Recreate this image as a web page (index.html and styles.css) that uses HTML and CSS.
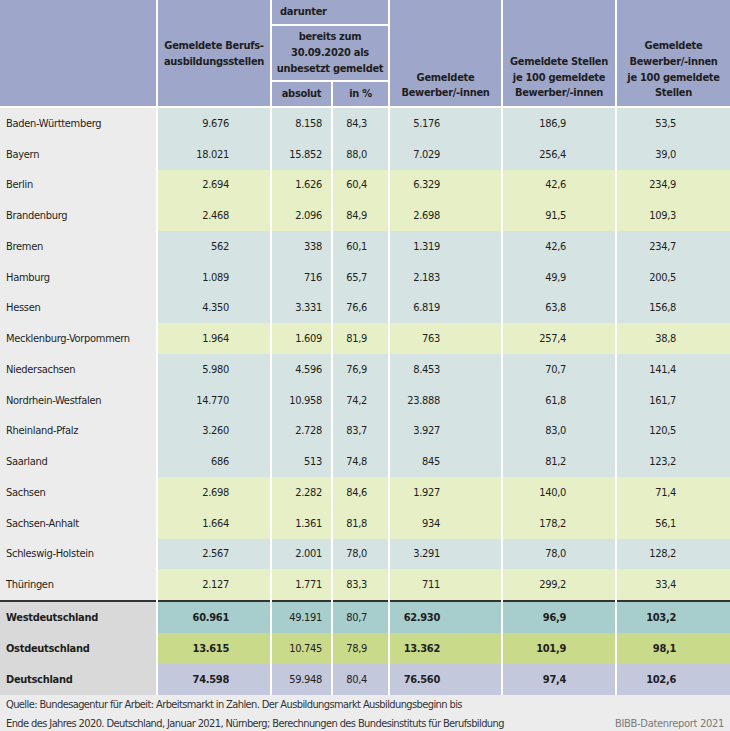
FILE: index.html
```html
<!DOCTYPE html>
<html lang="de">
<head>
<meta charset="utf-8">
<title>Ausbildungsstellen</title>
<link rel="stylesheet" href="styles.css">
</head>
<body>
<table class="t">
  <colgroup>
    <col class="w1"><col class="w2"><col class="w3"><col class="w4"><col class="w5"><col class="w6"><col class="w7">
  </colgroup>
  <thead>
    <tr class="hr1">
      <th rowspan="3" class="first"></th>
      <th rowspan="3" class="mid">Gemeldete Berufs-<br>ausbildungsstellen</th>
      <th colspan="2" class="dar">darunter</th>
      <th rowspan="3" class="bot">Gemeldete<br>Bewerber/-innen</th>
      <th rowspan="3" class="bot">Gemeldete Stellen<br>je 100 gemeldete<br>Bewerber/-innen</th>
      <th rowspan="3" class="bot">Gemeldete<br>Bewerber/-innen<br>je 100 gemeldete<br>Stellen</th>
    </tr>
    <tr class="hr2">
      <th colspan="2">bereits zum<br>30.09.2020 als<br>unbesetzt gemeldet</th>
    </tr>
    <tr class="hr3">
      <th>absolut</th>
      <th>in %</th>
    </tr>
  </thead>
  <tbody>
    <tr class="w"><td class="lbl">Baden-Württemberg</td><td class="n2">9.676</td><td class="n3">8.158</td><td class="n4">84,3</td><td class="n5">5.176</td><td class="n6">186,9</td><td class="n7">53,5</td></tr>
    <tr class="w"><td class="lbl">Bayern</td><td class="n2">18.021</td><td class="n3">15.852</td><td class="n4">88,0</td><td class="n5">7.029</td><td class="n6">256,4</td><td class="n7">39,0</td></tr>
    <tr class="e"><td class="lbl">Berlin</td><td class="n2">2.694</td><td class="n3">1.626</td><td class="n4">60,4</td><td class="n5">6.329</td><td class="n6">42,6</td><td class="n7">234,9</td></tr>
    <tr class="e"><td class="lbl">Brandenburg</td><td class="n2">2.468</td><td class="n3">2.096</td><td class="n4">84,9</td><td class="n5">2.698</td><td class="n6">91,5</td><td class="n7">109,3</td></tr>
    <tr class="w"><td class="lbl">Bremen</td><td class="n2">562</td><td class="n3">338</td><td class="n4">60,1</td><td class="n5">1.319</td><td class="n6">42,6</td><td class="n7">234,7</td></tr>
    <tr class="w"><td class="lbl">Hamburg</td><td class="n2">1.089</td><td class="n3">716</td><td class="n4">65,7</td><td class="n5">2.183</td><td class="n6">49,9</td><td class="n7">200,5</td></tr>
    <tr class="w"><td class="lbl">Hessen</td><td class="n2">4.350</td><td class="n3">3.331</td><td class="n4">76,6</td><td class="n5">6.819</td><td class="n6">63,8</td><td class="n7">156,8</td></tr>
    <tr class="e"><td class="lbl">Mecklenburg-Vorpommern</td><td class="n2">1.964</td><td class="n3">1.609</td><td class="n4">81,9</td><td class="n5">763</td><td class="n6">257,4</td><td class="n7">38,8</td></tr>
    <tr class="w"><td class="lbl">Niedersachsen</td><td class="n2">5.980</td><td class="n3">4.596</td><td class="n4">76,9</td><td class="n5">8.453</td><td class="n6">70,7</td><td class="n7">141,4</td></tr>
    <tr class="w"><td class="lbl">Nordrhein-Westfalen</td><td class="n2">14.770</td><td class="n3">10.958</td><td class="n4">74,2</td><td class="n5">23.888</td><td class="n6">61,8</td><td class="n7">161,7</td></tr>
    <tr class="w"><td class="lbl">Rheinland-Pfalz</td><td class="n2">3.260</td><td class="n3">2.728</td><td class="n4">83,7</td><td class="n5">3.927</td><td class="n6">83,0</td><td class="n7">120,5</td></tr>
    <tr class="w"><td class="lbl">Saarland</td><td class="n2">686</td><td class="n3">513</td><td class="n4">74,8</td><td class="n5">845</td><td class="n6">81,2</td><td class="n7">123,2</td></tr>
    <tr class="e"><td class="lbl">Sachsen</td><td class="n2">2.698</td><td class="n3">2.282</td><td class="n4">84,6</td><td class="n5">1.927</td><td class="n6">140,0</td><td class="n7">71,4</td></tr>
    <tr class="e"><td class="lbl">Sachsen-Anhalt</td><td class="n2">1.664</td><td class="n3">1.361</td><td class="n4">81,8</td><td class="n5">934</td><td class="n6">178,2</td><td class="n7">56,1</td></tr>
    <tr class="w"><td class="lbl">Schleswig-Holstein</td><td class="n2">2.567</td><td class="n3">2.001</td><td class="n4">78,0</td><td class="n5">3.291</td><td class="n6">78,0</td><td class="n7">128,2</td></tr>
    <tr class="e"><td class="lbl">Thüringen</td><td class="n2">2.127</td><td class="n3">1.771</td><td class="n4">83,3</td><td class="n5">711</td><td class="n6">299,2</td><td class="n7">33,4</td></tr>
    <tr class="sum sw"><td class="lbl">Westdeutschland</td><td class="n2">60.961</td><td class="n3">49.191</td><td class="n4">80,7</td><td class="n5">62.930</td><td class="n6">96,9</td><td class="n7">103,2</td></tr>
    <tr class="sum so"><td class="lbl">Ostdeutschland</td><td class="n2">13.615</td><td class="n3">10.745</td><td class="n4">78,9</td><td class="n5">13.362</td><td class="n6">101,9</td><td class="n7">98,1</td></tr>
    <tr class="sum sd"><td class="lbl">Deutschland</td><td class="n2">74.598</td><td class="n3">59.948</td><td class="n4">80,4</td><td class="n5">76.560</td><td class="n6">97,4</td><td class="n7">102,6</td></tr>
  </tbody>
</table>
<div class="foot">
  <p class="fl">Quelle: Bundesagentur für Arbeit: Arbeitsmarkt in Zahlen. Der Ausbildungsmarkt Ausbildungsbeginn bis</p>
  <p class="fl row"><span>Ende des Jahres 2020. Deutschland, Januar 2021, Nürnberg; Berechnungen des Bundesinstituts für Berufsbildung</span><span class="src">BIBB-Datenreport 2021</span></p>
</div>
</body>
</html>
```
FILE: styles.css
```css
html, body {
  margin: 0;
  padding: 0;
  background: #ececec;
}
body {
  width: 730px;
  font-family: "DejaVu Sans Condensed", "Liberation Sans Narrow", "Liberation Sans", sans-serif;
  font-size: 11px;
  letter-spacing: -0.3px;
  color: #1e1e1e;
}
.t {
  width: 730px;
  table-layout: fixed;
  border-collapse: collapse;
}
.w1 { width: 157px; }
.w2 { width: 114px; }
.w3 { width: 61px; }
.w4 { width: 57px; }
.w5 { width: 113px; }
.w6 { width: 114px; }
.w7 { width: 114px; }

th {
  background: #9ea6c9;
  font-weight: bold;
  line-height: 15.7px;
  padding: 0;
  white-space: nowrap;
  border-left: 2px solid #fff;
  border-bottom: 2px solid #fff;
  text-align: center;
  color: #1e1e1e;
}
th.first { border-left: 0; }
th.mid { vertical-align: middle; padding-top: 2px; }
th.bot { vertical-align: bottom; padding-bottom: 5px; }
th.dar { text-align: left; padding-left: 8px; height: 24px; }
.hr2 th { height: 54px; }
.hr3 th { height: 24px; }

td {
  height: 30.75px;
  padding: 0;
  white-space: nowrap;
  border-left: 2px solid #fff;
  text-align: right;
  vertical-align: middle;
}
td.lbl {
  border-left: 0;
  text-align: left;
  padding-left: 6px;
  background: #ececec;
}
.n2 { padding-right: 41px; }
.n3 { padding-right: 9px; }
.n4 { padding-right: 21px; }
.n5 { padding-right: 61px; }
.n6 { padding-right: 49px; }
.n7 { padding-right: 54px; }

tr.w td:not(.lbl) { background: #d5e4e3; }
tr.e td:not(.lbl) { background: #e6efc6; }

tr.sum td { height: 31px; font-weight: bold; }
tr.sum td.n3, tr.sum td.n4 { font-weight: normal; }
tr.sum td.lbl { background: #d9d9d9; }
tr.sw td { border-top: 2px solid #333; }
tr.sw td:not(.lbl) { background: #a7cdcc; }
tr.so td:not(.lbl) { background: #c9da8a; }
tr.sd td:not(.lbl) { background: #c4c8dd; }

.foot {
  padding: 0 6px;
  color: #333;
  letter-spacing: -0.6px;
}
.fl {
  margin: 0;
  line-height: 19px;
  white-space: nowrap;
}
.row {
  display: flex;
  justify-content: space-between;
}
.src { color: #7a7a7a; letter-spacing: -0.3px; }
```
